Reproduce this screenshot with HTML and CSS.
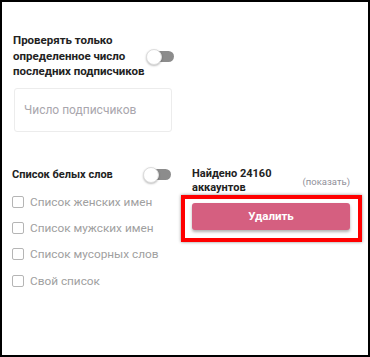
FILE: index.html
```html
<!DOCTYPE html>
<html lang="ru">
<head>
<meta charset="utf-8">
<link rel="stylesheet" href="styles.css">
</head>
<body>
<div class="frame">
  <div class="top">
    <div class="opt-row">
      <div class="opt-title">Проверять только<br>определенное число<br>последних подписчиков</div>
      <span class="toggle"><span class="knob"></span></span>
    </div>
    <div class="field">Число подписчиков</div>
  </div>
  <div class="bottom">
    <div class="left">
      <div class="list-head">
        <div class="head-title">Список белых слов</div>
        <span class="toggle"><span class="knob"></span></span>
      </div>
      <div class="items">
        <div class="item"><span class="box"></span>Список женских имен</div>
        <div class="item"><span class="box"></span>Список мужских имен</div>
        <div class="item"><span class="box"></span>Список мусорных слов</div>
        <div class="item"><span class="box"></span>Свой список</div>
      </div>
    </div>
    <div class="right">
      <div class="found">
        <div class="found-text">Найдено 24160<br>аккаунтов</div>
        <span class="show">(показать)</span>
      </div>
      <div class="mark">
        <button class="del">Удалить</button>
      </div>
    </div>
  </div>
</div>
</body>
</html>
```

FILE: styles.css
```css
html, body {
  margin: 0;
  padding: 0;
  background: #000;
}
.frame {
  width: 370px;
  height: 357px;
  box-sizing: border-box;
  border: 2px solid #000;
  background: #fff;
  font-family: Roboto, "Liberation Sans", sans-serif;
  color: #222;
  padding: 31px 0 0 10px;
}
.top {
  display: flex;
  flex-direction: column;
}
.opt-row {
  display: flex;
  align-items: center;
  justify-content: space-between;
  width: 161px;
  padding-left: 1px;
}
.opt-title {
  font-size: 11.5px;
  font-weight: 700;
  line-height: 15.5px;
  white-space: nowrap;
}
.toggle {
  position: relative;
  display: inline-block;
  width: 28px;
  height: 15px;
}
.toggle::before {
  content: "";
  position: absolute;
  left: 4px;
  right: 0;
  top: 2px;
  height: 11px;
  border-radius: 6px;
  background: #8c8c8c;
}
.knob {
  position: absolute;
  left: 0;
  top: 0;
  width: 14px;
  height: 14px;
  border-radius: 50%;
  background: #fff;
  border: 0.5px solid #ddd;
  box-shadow: 0 1px 2px rgba(0,0,0,0.25);
}
.field {
  margin: 8px 0 0 2px;
  width: 158px;
  height: 44px;
  box-sizing: border-box;
  border: 1px solid #ececec;
  border-radius: 3px;
  padding-left: 9px;
  display: flex;
  align-items: center;
  font-size: 12px;
  color: #a9a6ad;
}
.bottom {
  margin-top: 35px;
  display: grid;
  grid-template-columns: 169px 181px;
}
.list-head {
  display: flex;
  align-items: center;
  justify-content: space-between;
  width: 159px;
  height: 15px;
}
.head-title {
  font-size: 11px;
  font-weight: 700;
  line-height: 15px;
}
.items {
  margin-top: 7px;
  display: flex;
  flex-direction: column;
}
.item {
  height: 26.4px;
  display: flex;
  align-items: center;
  font-size: 11.8px;
  color: #a0a0a0;
}
.box {
  width: 12px;
  height: 12px;
  box-sizing: border-box;
  border: 1px solid #b5b5b5;
  border-radius: 2px;
  margin-right: 6px;
}
.right {
  display: flex;
  flex-direction: column;
}
.found {
  display: flex;
  align-items: center;
  padding: 0 12px 0 11px;
}
.found-text {
  font-size: 11px;
  font-weight: 700;
  line-height: 14px;
  white-space: nowrap;
}
.show {
  margin-left: auto;
  font-size: 9.5px;
  color: #8f8f99;
  padding-top: 2px;
}
.mark {
  border: 4px solid #f00;
  padding: 4px 8px 8px 7px;
  box-shadow: 0 0 3px rgba(0,0,0,0.45);
}
.del {
  display: block;
  width: 100%;
  height: 27px;
  border: none;
  border-radius: 3px;
  background: #d55f80;
  color: #fff;
  font-family: Roboto, "Liberation Sans", sans-serif;
  font-size: 11.5px;
  font-weight: 700;
  box-shadow: 0 2px 3px rgba(0,0,0,0.3);
}
```
